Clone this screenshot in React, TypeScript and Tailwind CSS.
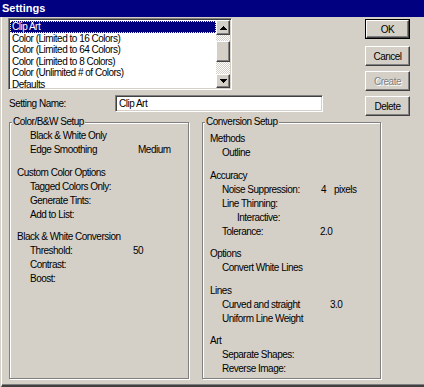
const items = [
  'Clip Art',
  'Color (Limited to 16 Colors)',
  'Color (Limited to 64 Colors)',
  'Color (Limited to 8 Colors)',
  'Color (Unlimited # of Colors)',
  'Defaults',
];

const raised = 'border-t border-l border-white border-b border-r border-b-[#404040] border-r-[#404040] shadow-[inset_-1px_-1px_0_#808080] bg-[#d4d0c8]';
const sunken = 'border-t border-l border-[#808080] border-b border-r border-b-white border-r-white shadow-[inset_1px_1px_0_#404040,inset_-1px_-1px_0_#d4d0c8]';
const etched = 'relative border border-[#808080] shadow-[1px_1px_0_#fff,inset_1px_1px_0_#fff]';

function Arrow({ down }: { down?: boolean }) {
  return (
    <svg width="7" height="4" viewBox="0 0 7 4" shapeRendering="crispEdges">
      <path d={down ? 'M0 0H7L3.5 4Z' : 'M3.5 0L7 4H0Z'} fill="#000" />
    </svg>
  );
}

function Button({ label, disabled, isDefault }: { label: string; disabled?: boolean; isDefault?: boolean }) {
  const inner = (
    <div className={`${raised} h-full w-full flex items-center justify-center ${disabled ? 'text-[#808080] [text-shadow:1px_1px_0_#fff]' : ''}`}>
      {label}
    </div>
  );
  if (isDefault) {
    return <div className="w-[45px] h-[20px] border border-black">{inner}</div>;
  }
  return <div className="w-[45px] h-[20px]">{inner}</div>;
}

export default function App() {
  return (
    <div className="w-[424px] h-[387px] bg-[#d4d0c8] flex flex-col overflow-hidden font-['Liberation_Sans',Arial,sans-serif] text-[10px] tracking-[-0.5px] text-black">
      {/* title bar */}
      <div className="h-[17px] bg-[#000080] text-white font-bold text-[11px] tracking-normal pl-[2px] flex items-center shrink-0">
        Settings
      </div>

      <div className="flex-1 ml-[1px] border-l border-white border-b-2 border-b-[#404040] shadow-[inset_0_-1px_0_#808080] flex flex-col">
        {/* top area */}
        <div className="h-[105px] flex shrink-0">
          <div className="ml-[6px] pt-[1px] w-[315px]">
            <div className={`${sunken} w-[224px] h-[72px] bg-white flex p-[1px]`}>
              <div className="flex-1 overflow-hidden leading-[11.5px] pt-[1px]">
                {items.map((it, i) =>
                  i === 0 ? (
                    <div key={it} className="h-[11.5px] bg-[#000080] text-white border border-dotted border-[#fff8b0] pl-[1px] leading-[9.5px]">
                      {it}
                    </div>
                  ) : (
                    <div key={it} className="h-[11.5px] pl-[2px] whitespace-nowrap">
                      {it}
                    </div>
                  )
                )}
              </div>
              <div className="w-[14px] flex flex-col">
                <div className={`${raised} h-[15px] flex items-center justify-center`}>
                  <Arrow />
                </div>
                <div className="flex-1 bg-[conic-gradient(#fff_25%,#d4d0c8_0_50%,#fff_0_75%,#d4d0c8_0)] bg-[length:2px_2px] pt-[6px]">
                  <div className={`${raised} h-[21px]`} />
                </div>
                <div className={`${raised} h-[14px] flex items-center justify-center`}>
                  <Arrow down />
                </div>
              </div>
            </div>

            <div className="mt-[5px] flex items-center h-[17px]">
              <div className="pl-[1px] w-[107px]">Setting Name:</div>
              <div className={`${sunken} w-[208px] h-[17px] bg-white pl-[3px] flex items-center`}>Clip Art</div>
            </div>
          </div>

          <div className="ml-[42px] pt-[2px] flex flex-col">
            <Button label="OK" isDefault />
            <div className="mt-[7px]"><Button label="Cancel" /></div>
            <div className="mt-[5px]"><Button label="Create" disabled /></div>
            <div className="mt-[5px]"><Button label="Delete" /></div>
          </div>
        </div>

        {/* group boxes */}
        <div className="flex pl-[7px] gap-[13px] leading-[14px]">
          <div className={`${etched} w-[180px] h-[257px] pt-[6px]`}>
            <div className="absolute left-[2px] top-[-7px] px-[1px] bg-[#d4d0c8] leading-[12px]">Color/B&amp;W Setup</div>
            <div className="pl-[20px]">Black &amp; White Only</div>
            <div className="pl-[20px] flex">
              <span className="w-[108px]">Edge Smoothing</span>
              <span>Medium</span>
            </div>

            <div className="pl-[7px] mt-[9px]">Custom Color Options</div>
            <div className="pl-[20px]">Tagged Colors Only:</div>
            <div className="pl-[20px]">Generate Tints:</div>
            <div className="pl-[20px]">Add to List:</div>

            <div className="pl-[7px] mt-[8px]">Black &amp; White Conversion</div>
            <div className="pl-[20px] flex">
              <span className="w-[103px]">Threshold:</span>
              <span>50</span>
            </div>
            <div className="pl-[20px]">Contrast:</div>
            <div className="pl-[20px]">Boost:</div>
          </div>

          <div className={`${etched} w-[179px] h-[257px] pt-[9px]`}>
            <div className="absolute left-[2px] top-[-7px] px-[1px] bg-[#d4d0c8] leading-[12px]">Conversion Setup</div>
            <div className="pl-[7px]">Methods</div>
            <div className="pl-[19px]">Outline</div>

            <div className="pl-[7px] mt-[9px]">Accuracy</div>
            <div className="pl-[19px] flex">
              <span className="w-[99px]">Noise Suppression:</span>
              <span className="w-[13px]">4</span>
              <span>pixels</span>
            </div>
            <div className="pl-[19px]">Line Thinning:</div>
            <div className="pl-[34px]">Interactive:</div>
            <div className="pl-[19px] flex">
              <span className="w-[98px]">Tolerance:</span>
              <span>2.0</span>
            </div>

            <div className="pl-[7px] mt-[8px]">Options</div>
            <div className="pl-[19px]">Convert White Lines</div>

            <div className="pl-[7px] mt-[9px]">Lines</div>
            <div className="pl-[19px] flex">
              <span className="w-[108px]">Curved and straight</span>
              <span>3.0</span>
            </div>
            <div className="pl-[19px]">Uniform Line Weight</div>

            <div className="pl-[7px] mt-[8px]">Art</div>
            <div className="pl-[19px]">Separate Shapes:</div>
            <div className="pl-[19px]">Reverse Image:</div>
          </div>
        </div>
      </div>
    </div>
  );
}
